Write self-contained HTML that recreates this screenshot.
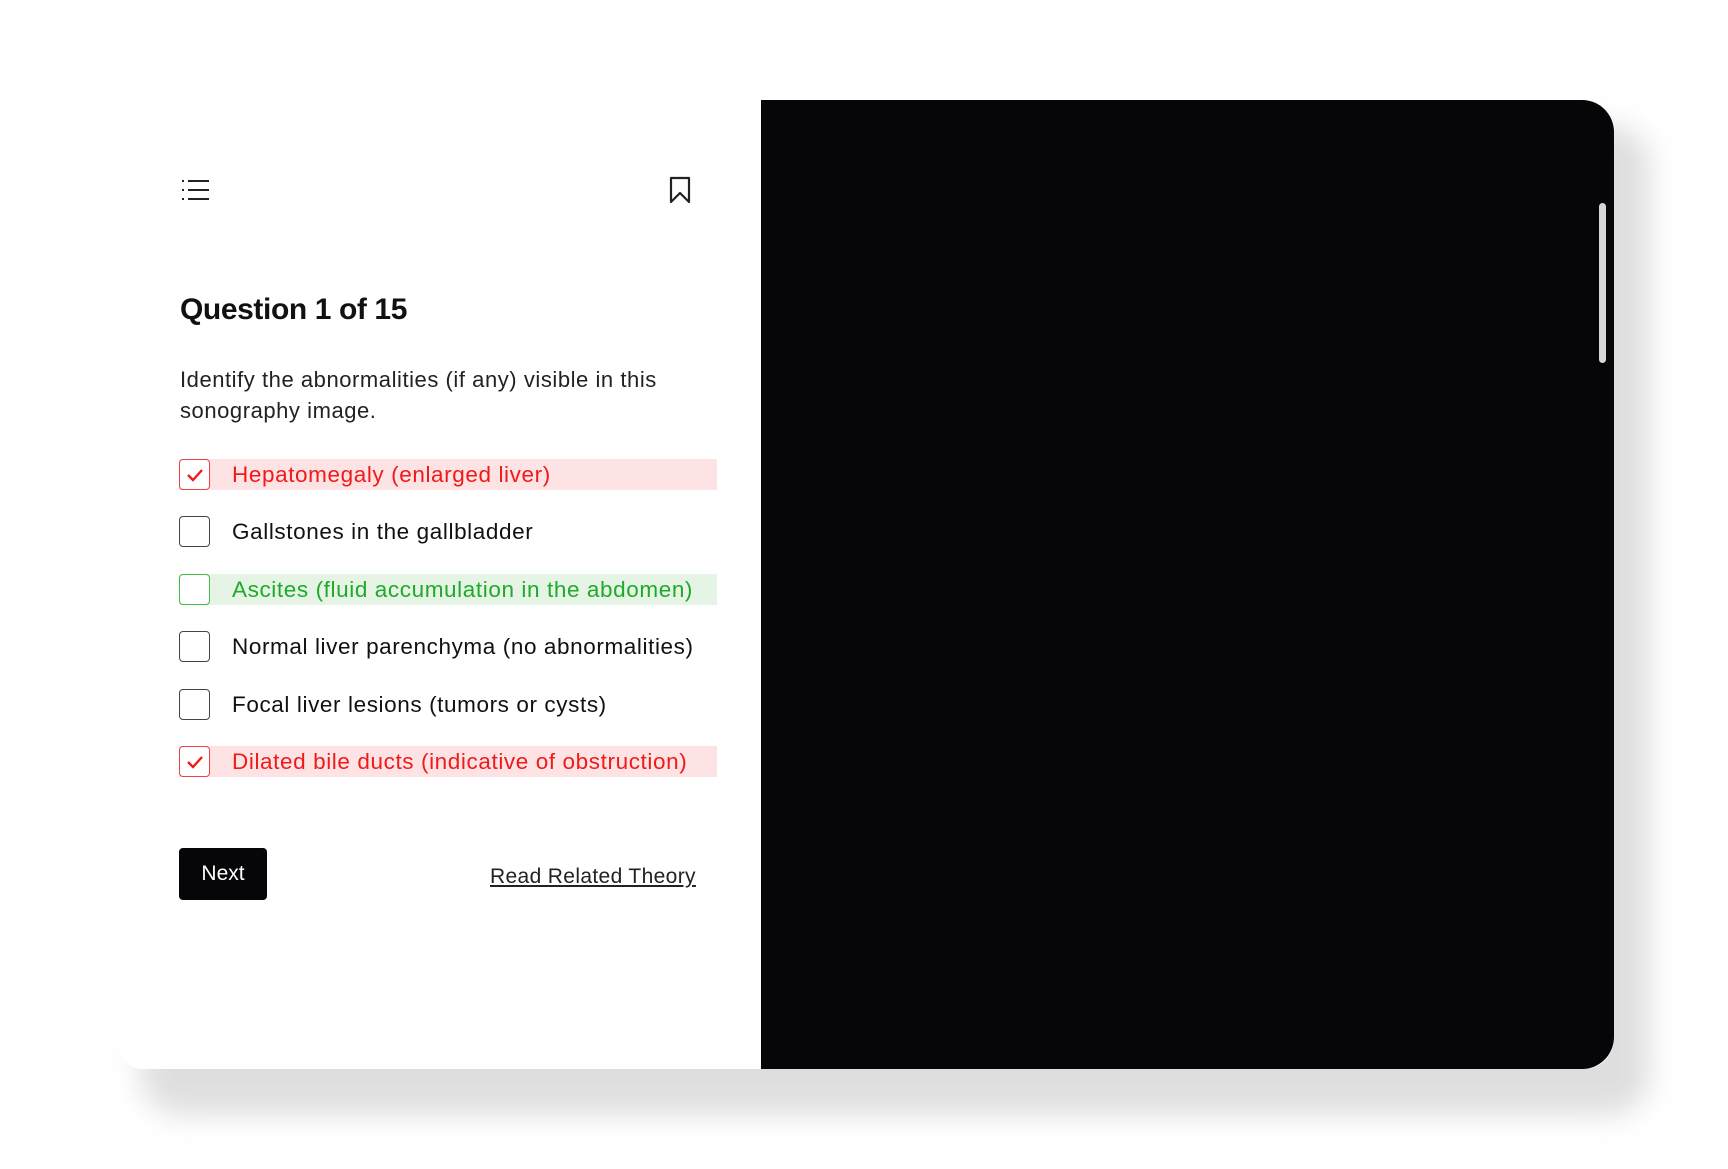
<!DOCTYPE html>
<html><head><meta charset="utf-8"><style>
*{margin:0;padding:0;box-sizing:border-box}
body{width:1728px;height:1169px;background:#fff;position:relative;overflow:hidden;font-family:"Liberation Sans",sans-serif;color:#111}
.shadow{position:absolute;left:140px;top:125px;width:1510px;height:990px;border-radius:40px;background:#d9d9d9;filter:blur(14px);opacity:.85}
.card{position:absolute;left:119px;top:100px;width:1495px;height:969px;background:#fff;border-radius:0 30px 30px 24px}
.black{position:absolute;left:761px;top:100px;width:853px;height:969px;background:#060508;border-radius:0 32px 32px 0}
.scroll{position:absolute;left:1599px;top:203px;width:7px;height:160px;border-radius:4px;background:#d6d6d6}
.abs{position:absolute}
h1{position:absolute;left:180px;top:293px;font-size:30px;font-weight:bold;letter-spacing:-0.4px}
.p{position:absolute;left:180px;top:364px;font-size:22px;line-height:31px;width:560px;color:#222;letter-spacing:0.55px}
.opt{position:absolute;left:179px;height:31px;width:538px;display:flex;align-items:center;font-size:22.5px;letter-spacing:0.6px}
.box{width:31px;height:31px;border:1.5px solid #444;border-radius:4px;margin-right:22px;flex:none;position:relative;background:#fff}
.red{background:#fee3e5;color:#f01a1a}.red .box{border-color:#f04040}
.green{background:#e5f4e4;color:#1faa2a}.green .box{border-color:#3fbf3f}
.box svg{position:absolute;left:6px;top:7px}
.next{position:absolute;left:179px;top:848px;width:88px;height:52px;background:#060508;border-radius:4px;color:#fff;font-size:21px;display:flex;align-items:center;justify-content:center}
.link{position:absolute;left:490px;top:865px;font-size:21px;text-decoration:underline;color:#222;letter-spacing:0.35px}
</style></head><body>
<div class="shadow"></div>
<div class="card"></div>
<div class="black"></div>
<div class="scroll"></div>
<svg class="abs" style="left:181px;top:179px" width="30" height="24" viewBox="0 0 30 24"><g stroke="#222" stroke-width="2"><line x1="1" y1="2" x2="3" y2="2"/><line x1="1" y1="11" x2="3" y2="11"/><line x1="1" y1="20" x2="3" y2="20"/><line x1="7" y1="2" x2="28" y2="2"/><line x1="7" y1="11" x2="28" y2="11"/><line x1="7" y1="20" x2="28" y2="20"/></g></svg>
<svg class="abs" style="left:668px;top:176px" width="24" height="28" viewBox="0 0 24 28"><path d="M3 2H21V26L12 17L3 26Z" fill="none" stroke="#222" stroke-width="2.2" stroke-linejoin="round"/></svg>
<h1>Question 1 of 15</h1>
<div class="p">Identify the abnormalities (if any) visible in this sonography image.</div>
<div class="opt red" style="top:459px"><div class="box"><svg width="18" height="16" viewBox="0 0 18 16"><path d="M2 8L7 13L16 3" fill="none" stroke="#f01a1a" stroke-width="2.4"/></svg></div>Hepatomegaly (enlarged liver)</div>
<div class="opt" style="top:516px"><div class="box"></div>Gallstones in the gallbladder</div>
<div class="opt green" style="top:574px"><div class="box"></div>Ascites (fluid accumulation in the abdomen)</div>
<div class="opt" style="top:631px"><div class="box"></div>Normal liver parenchyma (no abnormalities)</div>
<div class="opt" style="top:689px"><div class="box"></div>Focal liver lesions (tumors or cysts)</div>
<div class="opt red" style="top:746px"><div class="box"><svg width="18" height="16" viewBox="0 0 18 16"><path d="M2 8L7 13L16 3" fill="none" stroke="#f01a1a" stroke-width="2.4"/></svg></div>Dilated bile ducts (indicative of obstruction)</div>
<div class="next">Next</div>
<div class="link">Read Related Theory</div>
</body></html>
